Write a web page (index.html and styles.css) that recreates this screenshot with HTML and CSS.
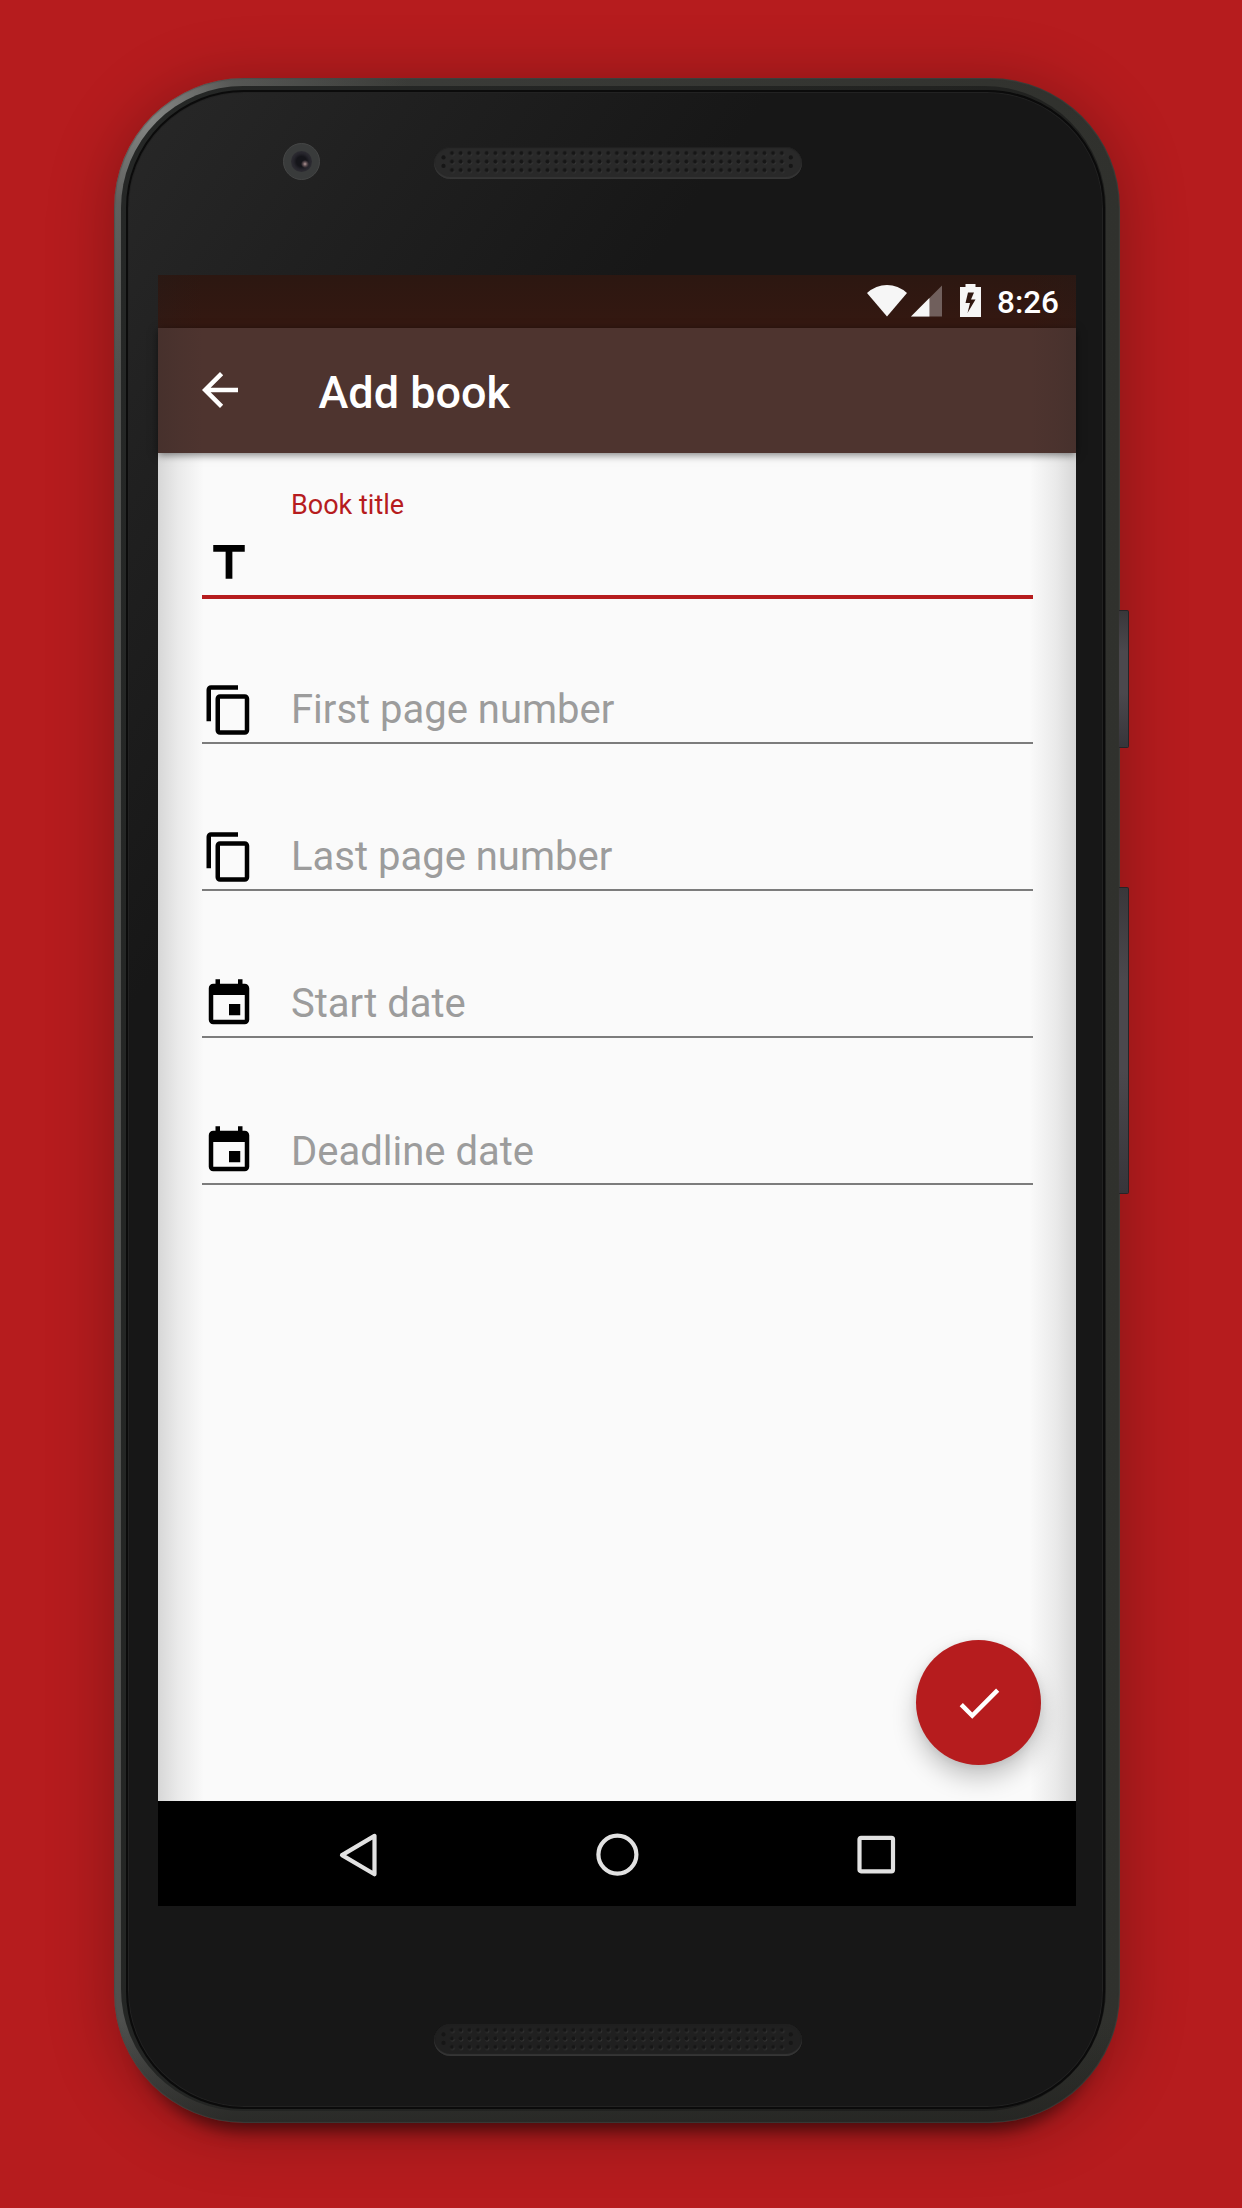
FILE: index.html
```html
<!DOCTYPE html>
<html lang="en">
<head>
<meta charset="utf-8">
<title>Add book</title>
<link rel="stylesheet" href="styles.css">
</head>
<body>
<svg width="0" height="0" class="defs" aria-hidden="true">
  <defs>
    <pattern id="holes" x="13.66" y="1.9" width="8.68" height="8.5" patternUnits="userSpaceOnUse">
      <circle cx="4.8" cy="5" r="2.1" fill="#3b3b3b"/>
      <circle cx="4.34" cy="4.25" r="2.1" fill="#161616"/>
    </pattern>
    <g id="grille">
      <rect x="13.66" y="1.9" width="338.5" height="25.5" fill="url(#holes)"/>
      <g fill="#161616">
        <circle cx="9.5" cy="10.4" r="2.1"/><circle cx="9.5" cy="18.9" r="2.1"/>
        <circle cx="356.8" cy="10.4" r="2.1"/><circle cx="356.8" cy="18.9" r="2.1"/>
      </g>
    </g>
    <symbol id="copy" viewBox="0 0 24 24"><path d="M16 1H4c-1.1 0-2 .9-2 2v14h2V3h12V1zm3 4H8c-1.1 0-2 .9-2 2v14c0 1.1.9 2 2 2h11c1.1 0 2-.9 2-2V7c0-1.1-.9-2-2-2zm0 16H8V7h11v14z"/></symbol>
    <symbol id="event" viewBox="0 0 24 24"><path d="M17 12h-5v5h5v-5zM16 1v2H8V1H6v2H5c-1.11 0-1.99.9-1.99 2L3 19c0 1.1.89 2 2 2h14c1.1 0 2-.9 2-2V5c0-1.1-.9-2-2-2h-1V1h-2zm3 18H5V8h14v11z"/></symbol>
  </defs>
</svg>
<div class="device">
  <i class="side-key power"></i>
  <i class="side-key volume"></i>
  <div class="rim">
    <div class="glass">
      <div class="forehead">
        <div class="camera"><i class="lens"></i></div>
        <svg class="speaker" viewBox="0 0 368 32"><use href="#grille"/></svg>
      </div>
      <main class="screen">
        <div class="status-bar">
          <svg class="wifi" viewBox="0 0 40 32"><path d="M0 8Q9 0 20 0T40 8L20 31.5z"/></svg>
          <svg class="signal" viewBox="0 0 32 32"><path class="dim" d="M32 0V32H0z"/><path d="M19 13V32H0z"/></svg>
          <svg class="battery" viewBox="0 0 21 33"><path fill-rule="evenodd" d="M5.500 0h10v3H21v30H0V3h5.500zM8 8.500L5.500 19h4.500L7.500 29 15.500 15.500h-4.500L14 8.500z"/></svg>
          <span class="clock">8:26</span>
        </div>
        <header class="toolbar">
          <svg class="icon" viewBox="0 0 24 24"><path d="M20 11H7.830l5.590-5.590L12 4l-8 8 8 8 1.410-1.410L7.830 13H20v-2z"/></svg>
          <h1 class="title">Add book</h1>
        </header>
        <form class="form">
          <div class="field focused">
            <svg class="icon" viewBox="0 0 24 24"><path d="M5 4v3h5.500v12h3V7H19V4z"/></svg>
            <label class="caption">Book title</label>
          </div>
          <div class="field"><svg class="icon"><use href="#copy"/></svg><label class="hint">First page number</label></div>
          <div class="field"><svg class="icon"><use href="#copy"/></svg><label class="hint">Last page number</label></div>
          <div class="field"><svg class="icon"><use href="#event"/></svg><label class="hint">Start date</label></div>
          <div class="field"><svg class="icon"><use href="#event"/></svg><label class="hint">Deadline date</label></div>
          <div class="fab"><svg class="icon" viewBox="0 0 24 24"><path d="M9 16.170L4.830 12l-1.420 1.410L9 19 21 7l-1.410-1.410z"/></svg></div>
        </form>
        <nav class="nav-bar">
          <svg viewBox="0 0 44 44"><path d="M37.500 2.900V41.300L5 22.100z"/></svg>
          <svg viewBox="0 0 44 44"><circle cx="21.400" cy="21.600" r="19"/></svg>
          <svg viewBox="0 0 44 44"><rect x="4.500" y="4.800" width="33.500" height="33.500" rx="1.500"/></svg>
        </nav>
      </main>
      <div class="chin">
        <svg class="speaker" viewBox="0 0 368 32"><use href="#grille"/></svg>
      </div>
    </div>
  </div>
</div>
</body>
</html>
```
FILE: styles.css
```css
* { box-sizing: border-box; }

body {
  margin: 0;
  width: 1242px;
  height: 2208px;
  padding: 78px 0 0 113.500px;
  overflow: hidden;
  background: #b61c1e;
  font-family: Roboto, "Liberation Sans", sans-serif;
}

.defs { position: absolute; }

/* Phone body */
.device {
  position: relative;
  width: 1006px;
  height: 2045px;
  padding: 8px 14px 12px 7.500px;
  border-radius: 130px;
  background:
    radial-gradient(circle at 36px 40px, #858785 0, rgba(110, 112, 110, .5) 90px, rgba(80, 80, 80, 0) 260px),
    linear-gradient(transparent 95%, rgba(30, 30, 28, .6)),
    linear-gradient(90deg, #50514f 0, #3d3e3b 12%, #30312d 100%);
  box-shadow:
    inset 0 0 1px 1px rgba(70, 72, 68, .6),
    0 30px 16px -22px rgba(0, 0, 0, .5),
    0 6px 64px 2px rgba(0, 0, 0, .27);
}

.side-key {
  position: absolute;
  left: 1005px;
  width: 10px;
  border-radius: 0 2px 2px 0;
  background: linear-gradient(#39373a, #4b484d 30%, #4b484d 60%, #37353a);
  border: solid #262427;
  border-width: 1px 1px 1px 0;
}
.power { top: 532px; height: 138px; }
.volume { top: 809px; height: 307px; }

.rim {
  height: 100%;
  padding: 4px 1px 2px 5px;
  border-radius: 122px;
  background: linear-gradient(100deg, #252726, #222321 60%, #1b1b1a);
}

.glass {
  height: 100%;
  border: 2px solid #0b0b0b;
  border-radius: 118px;
  background: linear-gradient(125deg, #282828 0, #202020 12%, #171717 27%, #171717 100%);
  box-shadow: inset 0 0 0 1px #222;
}

.forehead {
  display: flex;
  align-items: center;
  height: 183px;
  padding: 0 0 42px 155px;
  gap: 114px;
}

.camera {
  display: flex;
  align-items: center;
  justify-content: center;
  width: 37px;
  height: 37px;
  margin-bottom: 2px;
  border-radius: 50%;
  background: #393b3b;
  border: 1px solid #454646;
}

.lens {
  width: 21px;
  height: 21px;
  border-radius: 50%;
  background:
    radial-gradient(circle at 14px 13px, #b39a98 0, #5b4c50 2px, transparent 4px),
    radial-gradient(circle, #15151a 0 5px, #25242b 8px, #2b2a30 10px);
}

.speaker {
  display: block;
  width: 368px;
  height: 32px;
  border-radius: 16px;
  background: #292929;
  box-shadow: inset 0 -2px 1px #353535, inset 0 1px 1px #202020;
}

.chin { padding: 118px 0 0 305.500px; }
.chin .speaker { background: #202020; }

/* App */
.screen {
  position: relative;
  display: flex;
  flex-direction: column;
  width: 918px;
  height: 1631px;
  margin-left: 30px;
  background: #fafafa;
}

/* Glass vignette along the screen edges */
.screen::after {
  content: "";
  position: absolute;
  inset: 0 0 105px;
  z-index: 3;
  pointer-events: none;
  background:
    linear-gradient(90deg, rgba(32, 32, 32, .16), rgba(32, 32, 32, .075) 20px, rgba(32, 32, 32, 0) 46px),
    linear-gradient(270deg, rgba(32, 32, 32, .16), rgba(32, 32, 32, .075) 20px, rgba(32, 32, 32, 0) 46px);
}

.status-bar {
  display: flex;
  justify-content: flex-end;
  height: 53px;
  padding: 10px 17px 0 0;
  background: linear-gradient(#2c1711, #341811 90%);
}

.status-bar svg { fill: #f6f6f6; }
.wifi { width: 40px; height: 32px; margin-right: 4px; }
.signal { width: 31px; height: 32px; margin-right: 18px; }
.battery { width: 21px; height: 33px; margin: -1px 16px 0 0; }
.status-bar .dim { fill: #705f5c; }

.clock {
  position: relative;
  z-index: 4;
  width: 62px;
  line-height: 36px;
  font-size: 31.5px;
  font-weight: 500;
  color: #fff;
}

.toolbar {
  position: relative;
  z-index: 1;
  display: flex;
  align-items: center;
  gap: 71.500px;
  height: 125px;
  padding: 0 35px 1px;
  background: #4e342f;
  box-shadow: 0 2px 8px rgba(0, 0, 0, .5);
}

.title {
  margin: 6px 0 0;
  font-size: 45px;
  font-weight: 500;
  line-height: 56px;
  color: #fff;
}

.icon {
  display: block;
  flex: none;
  width: 54px;
  height: 54px;
}
.toolbar .icon, .fab .icon { fill: #fff; }

.form {
  position: relative;
  flex: 1;
  padding: 0 43px 0 44px;
}

.field {
  display: flex;
  align-items: flex-end;
  gap: 35.500px;
  height: 147.200px;
  padding-bottom: 5px;
  border-bottom: 2px solid #7c7c7c;
}
.field .icon { margin-left: -.500px; }

.focused {
  height: 145.600px;
  border-bottom: 4px solid #b61c1e;
}
.focused + .field { height: 145px; }

.caption {
  align-self: flex-start;
  padding-top: 35px;
  font-size: 27px;
  line-height: 34px;
  color: #b61c1e;
}

.hint {
  padding-bottom: 2.500px;
  font-size: 40px;
  line-height: 48px;
  color: #9c9c9c;
}

.fab {
  position: absolute;
  right: 35px;
  bottom: 36px;
  display: flex;
  align-items: center;
  justify-content: center;
  width: 125px;
  height: 125px;
  border-radius: 50%;
  background: #b61c1e;
  box-shadow: 0 13px 24px rgba(0, 0, 0, .22), 0 2px 8px rgba(0, 0, 0, .08);
}

.nav-bar {
  display: flex;
  align-items: center;
  gap: 215px;
  height: 105px;
  padding: 2px 0 0 179px;
  background: #000;
}

.nav-bar svg {
  width: 44px;
  height: 44px;
  fill: none;
  stroke: #e2e2e2;
  stroke-width: 4.2;
  stroke-linejoin: round;
}
```
